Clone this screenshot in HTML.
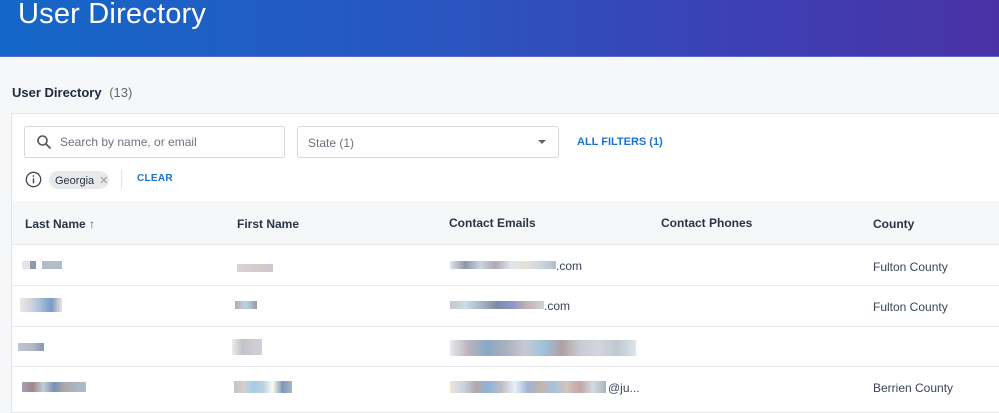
<!DOCTYPE html>
<html><head><meta charset="utf-8"><style>
*{margin:0;padding:0;box-sizing:border-box}
body{width:999px;height:407px;overflow:hidden;background:#f6f7f9;font-family:"Liberation Sans",sans-serif;position:relative;color:#1f2a3c}
.hdr{position:absolute;left:0;top:0;width:999px;height:57px;background:linear-gradient(90deg,#1467c8 0%,#2a55c0 45%,#3d3fb4 75%,#4a32a6 100%);border-bottom:1px solid #5a6ad0}
.hdr h1{position:absolute;left:18px;top:-2px;font-weight:normal;font-size:29px;color:#fff;letter-spacing:.2px}
.t{position:absolute;white-space:nowrap}
.card{position:absolute;left:11px;top:113px;width:1000px;height:300px;background:#fff;border:1px solid #e3e5e8}
.box{position:absolute;background:#fff;border:1px solid #d5d8dc;border-radius:3px}
.th{position:absolute;left:12px;top:201px;width:990px;height:44px;background:#f6f7f9;border-bottom:1px solid #e6e8eb}
.line{position:absolute;left:12px;width:990px;height:1px;background:#e8eaed}
.hd{font-size:12px;font-weight:bold;color:#2a3446}
.cell{font-size:12px;color:#3a4458}
.b{position:absolute;height:8px}
</style></head><body>
<div class="hdr"><h1>User Directory</h1></div>
<div class="t" style="left:12px;top:85px;font-size:13px;font-weight:bold;color:#1f2a3c">User Directory <span style="font-weight:normal;color:#666;margin-left:4px">(13)</span></div>
<div class="card"></div>
<div class="box" style="left:24px;top:126px;width:261px;height:32px"></div>
<svg class="t" style="left:36px;top:134px" width="16" height="16" viewBox="0 0 16 16"><circle cx="6.5" cy="6.5" r="4.5" fill="none" stroke="#555" stroke-width="1.6"/><path d="M10 10l4.5 4.5" stroke="#555" stroke-width="1.8"/></svg>
<div class="t" style="left:60px;top:135px;font-size:12px;color:#6b7280">Search by name, or email</div>
<div class="box" style="left:297px;top:126px;width:262px;height:32px"></div>
<div class="t" style="left:308px;top:136px;font-size:12px;color:#6b7280">State (1)</div>
<div class="t" style="left:538px;top:140px;width:0;height:0;border-left:4px solid transparent;border-right:4px solid transparent;border-top:4px solid #666"></div>
<div class="t" style="left:577px;top:136px;font-size:11px;font-weight:bold;color:#1a73d0">ALL FILTERS (1)</div>
<svg class="t" style="left:25px;top:171px" width="17" height="17" viewBox="0 0 17 17"><circle cx="8.5" cy="8.5" r="7.2" fill="none" stroke="#3d4658" stroke-width="1.3"/><rect x="7.8" y="7.3" width="1.4" height="5" fill="#3d4658"/><circle cx="8.5" cy="5" r=".9" fill="#3d4658"/></svg>
<div class="t" style="left:49px;top:171px;width:60px;height:18px;border-radius:9px;background:#e8e9eb"></div>
<div class="t" style="left:55px;top:174px;font-size:11px;color:#2a3446">Georgia <span style="color:#999;margin-left:2px">✕</span></div>
<div class="t" style="left:121px;top:170px;width:1px;height:19px;background:#e0e2e5"></div>
<div class="t" style="left:137px;top:173px;font-size:10px;font-weight:bold;color:#1a73d0;letter-spacing:.3px">CLEAR</div>
<div class="th"></div>
<div class="t hd" style="left:25px;top:217px">Last Name <span style="font-weight:normal;color:#555">↑</span></div>
<div class="t hd" style="left:237px;top:217px">First Name</div>
<div class="t hd" style="left:449px;top:216px">Contact Emails</div>
<div class="t hd" style="left:661px;top:216px">Contact Phones</div>
<div class="t hd" style="left:873px;top:217px">County</div>
<div class="line" style="top:285px"></div>
<div class="line" style="top:326px"></div>
<div class="line" style="top:366px"></div>
<!-- row 1 -->
<div class="b" style="left:22px;top:261px;width:40px;background:linear-gradient(90deg,#e4e6ea 0 20%,#8f98ad 20% 35%,#fff 35% 50%,#b3bccb 50% 100%)"></div>
<div class="b" style="left:237px;top:264px;width:36px;background:linear-gradient(90deg,#d5d3d8,#d8ccc8,#c8c8d0)"></div>
<div class="b" style="left:450px;top:261px;width:106px;background:linear-gradient(90deg,#e0e4ea,#8e96aa,#c9d4e2,#b0a8b6,#dde6e8,#e8e0d8,#ccd6e2,#b5bccb)"></div>
<div class="t cell" style="left:556px;top:259px">.com</div>
<div class="t cell" style="left:873px;top:260px">Fulton County</div>
<!-- row 2 -->
<div class="b" style="left:20px;top:298px;width:42px;height:14px;background:linear-gradient(90deg,#efe6e6,#cfd6e0,#a6bcd6,#7b9ac4,#ece4e4)"></div>
<div class="b" style="left:235px;top:301px;width:22px;background:linear-gradient(90deg,#c4aaa4,#b8d6de,#989aaa)"></div>
<div class="b" style="left:450px;top:301px;width:94px;background:linear-gradient(90deg,#c4c8d0,#c8dbe8,#a8b4c6,#8288a8,#8c98c8,#c4b4b4,#d0d4dc)"></div>
<div class="t cell" style="left:544px;top:299px">.com</div>
<div class="t cell" style="left:873px;top:300px">Fulton County</div>
<!-- row 3 -->
<div class="b" style="left:18px;top:343px;width:26px;background:linear-gradient(90deg,#c0c4d0,#b4bcc8,#8a98b0)"></div>
<div class="b" style="left:232px;top:339px;width:30px;height:16px;background:linear-gradient(90deg,#f0ece8,#c0c4cc,#d4cad0,#c8d2da)"></div>
<div class="b" style="left:450px;top:340px;width:186px;height:16px;background:linear-gradient(90deg,#e8e8ec,#b8b4bc,#8aa8c8,#a8b0bc,#c8c8d4,#9cc4dc,#b0a0a4,#c8ccd4,#d4d4dc,#c0c8d0,#dce4ec)"></div>
<!-- row 4 -->
<div class="b" style="left:22px;top:382px;width:64px;height:10px;background:linear-gradient(90deg,#a6a0b4,#a08888,#c4ccd8,#7892b4,#b0a8a8,#a8b4c4,#b0bccc)"></div>
<div class="b" style="left:234px;top:381px;width:58px;height:12px;background:linear-gradient(90deg,#c0c4c8,#d4d0cc,#a8cce4,#b8d0e4,#fafaf0,#7f98b8,#a8b4c4)"></div>
<div class="b" style="left:450px;top:381px;width:156px;height:12px;background:linear-gradient(90deg,#f0e4d8,#c8d4e4,#b4a8ac,#8cb4d8,#c0c0c8,#e8f0f8,#9cb4d4,#c4b4ac,#a4c4dc,#d4c4bc,#c4a4a4,#d0dce4,#a8b4c0)"></div>
<div class="t cell" style="left:608px;top:381px">@ju...</div>
<div class="t cell" style="left:873px;top:381px">Berrien County</div>
</body></html>
